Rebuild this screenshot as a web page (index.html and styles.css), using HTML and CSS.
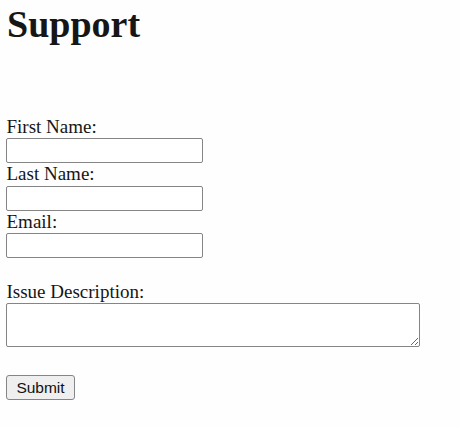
FILE: index.html
```html
<!DOCTYPE html>
<html>
<head>
<meta charset="utf-8">
<title>Support</title>
<link rel="stylesheet" href="styles.css">
</head>
<body>
<h1 class="title">Support</h1>
<form class="form">
  <label class="label" for="fn">First Name:</label>
  <input class="field" id="fn" type="text">
  <label class="label" for="ln">Last Name:</label>
  <input class="field" id="ln" type="text">
  <label class="label" for="em">Email:</label>
  <input class="field" id="em" type="text">
  <div class="spacer"></div>
  <label class="label" for="desc">Issue Description:</label>
  <textarea class="area" id="desc"></textarea>
  <div class="actions">
    <button class="submit" type="submit">Submit</button>
  </div>
</form>
</body>
</html>
```
FILE: styles.css
```css
html, body {
  background: #fefefe;
}
body {
  margin: 0;
  padding: 0 0 0 6px;
  font-family: "Liberation Serif", "Times New Roman", serif;
  color: #161616;
}
.title {
  margin: 0;
  padding-top: 2px;
  font-size: 38px;
  line-height: 44px;
  font-weight: bold;
  padding-left: 1px;
  height: 44px;
}
.form {
  display: flex;
  flex-direction: column;
  align-items: flex-start;
  margin-top: 69.5px;
}
.label {
  display: block;
  font-size: 19px;
  line-height: 22.5px;
  height: 22.5px;
  padding-left: 0.5px;
}
.field {
  box-sizing: border-box;
  width: 197px;
  height: 25px;
  margin: 0;
  border: 1px solid #858585;
  border-radius: 2px;
  background: #fff;
}
.spacer {
  height: 22.5px;
}
.area {
  box-sizing: border-box;
  width: 414px;
  height: 44px;
  margin: 0;
  border: 1px solid #858585;
  border-radius: 2px;
  background: #fff;
  resize: both;
}
.actions {
  margin-top: 28px;
}
.submit {
  box-sizing: border-box;
  width: 69px;
  height: 25px;
  margin: 0;
  padding: 0;
  font-family: "Liberation Sans", Arial, sans-serif;
  font-size: 15.5px;
  color: #111;
  background: #efefef;
  border: 1px solid #858585;
  border-radius: 3px;
}
```
